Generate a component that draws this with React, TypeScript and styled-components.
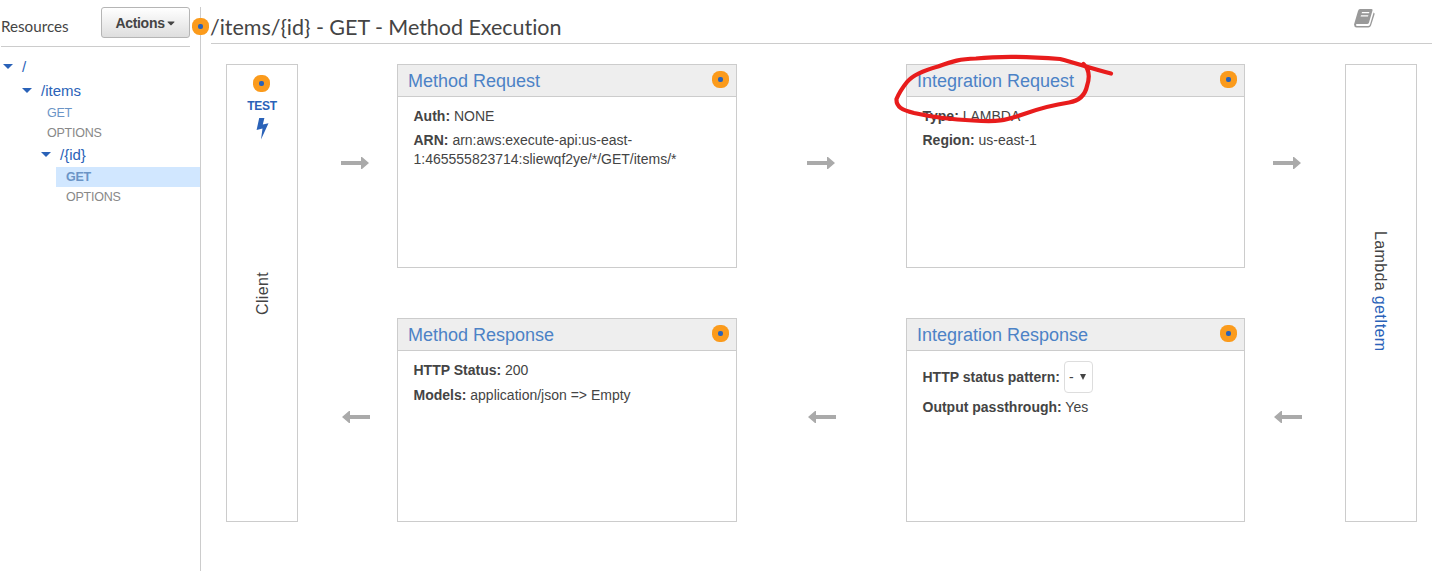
import React from 'react';
import styled, { createGlobalStyle, css } from 'styled-components';
import { FaCaretDown } from 'react-icons/fa';

const GlobalStyle = createGlobalStyle`
  * { box-sizing: border-box; }
  body {
    margin: 0;
    background: #fff;
    color: #444;
    font: 14px/19px "Liberation Sans", Arial, sans-serif;
    overflow: hidden;
  }
`;

const Page = styled.div`
  display: flex;
  width: 1439px;
  height: 571px;
  padding-top: 7px;
`;

const Sidebar = styled.aside`
  position: relative;
  width: 201px;
  flex: none;
  border-right: 1px solid #ccc;
`;

const SidebarHeader = styled.div`
  display: flex;
  justify-content: space-between;
  height: 40px;
  margin: 0 10px 8px 1px;
  border-bottom: 1px solid #ccc;
`;

const SidebarTitle = styled.span`
  font: 15.2px/39px Lato, sans-serif;
`;

const ActionsButton = styled.button`
  display: flex;
  align-items: center;
  justify-content: center;
  width: 89px;
  height: 31px;
  padding: 0 0 0 1px;
  border: 1px solid #b5b5b5;
  border-radius: 3px;
  background: linear-gradient(#fff, #dedede);
  color: #444;
  font: bold 14px "Liberation Sans", Arial, sans-serif;
  letter-spacing: -0.3px;
`;

const Bullet = styled.span`
  display: flex;
  align-items: center;
  justify-content: center;
  flex: none;
  width: 17px;
  height: 17px;
  border-radius: 7.5px;
  background: #fb9b1c;

  &::after {
    content: '';
    width: 5px;
    height: 5px;
    border-radius: 2px;
    background: #2a62b8;
  }
`;

const EdgeBullet = styled(Bullet)`
  position: absolute;
  top: 11px;
  right: -9px;
`;

const ResourceRow = styled.div<{ $depth: number }>`
  display: flex;
  align-items: center;
  gap: 9px;
  height: 24px;
  padding: 0 0 2px ${({ $depth }) => 3 + $depth * 19}px;
  color: #2a62b8;
  font-size: 15px;
`;

const Triangle = styled.span`
  border: solid transparent;
  border-width: 5px 5px 0;
  border-top-color: #2a62b8;
`;

const MethodRow = styled.div<{ $indent: number; $tone: string; $selected?: boolean }>`
  height: 20px;
  margin-left: ${({ $indent }) => $indent}px;
  padding-left: 10px;
  color: ${({ $tone }) => $tone};
  font-size: 12.5px;
  letter-spacing: -0.25px;
  line-height: 20px;
  ${({ $selected }) => $selected && css`
    background: #d1e7ff;
    font-weight: bold;
  `}
`;

const Main = styled.main`
  flex: none;
  width: 1221px;
  margin-left: 10px;
`;

const Header = styled.header`
  display: flex;
  justify-content: space-between;
  height: 37px;
  padding-right: 57px;
  border-bottom: 1px solid #ccc;
`;

const Title = styled.h1`
  margin: 0 0 0 -1px;
  color: #444;
  font: 21.5px/40px Lato, sans-serif;
  letter-spacing: -0.03px;
`;

const BookIcon = styled.svg`
  margin-top: 1px;
`;

const Diagram = styled.div`
  display: grid;
  grid-template-columns: 72px 99px 340px 169px 339px 100px 72px;
  grid-template-rows: 204px 50px 204px;
  margin: 20px 0 0 15px;
`;

const Endpoint = styled.div<{ $column: number }>`
  display: flex;
  flex-direction: column;
  align-items: center;
  grid-row: 1 / 4;
  grid-column: ${({ $column }) => $column};
  border: 1px solid #ccc;
`;

const TestLink = styled.div`
  display: flex;
  flex-direction: column;
  align-items: center;
  height: 80px;
  padding: 10px 0 0;
  color: #2a62b8;
  font: bold 12px/14px "Liberation Sans", Arial, sans-serif;
  letter-spacing: -0.35px;

  ${Bullet} { margin: 0 1px 7px 0; }
  svg { margin-top: 4px; }
`;

const VerticalLabel = styled.div<{ $up?: boolean }>`
  writing-mode: vertical-rl;
  font-size: 16px;
  line-height: 20px;
  letter-spacing: 0.35px;
  ${({ $up }) => $up ? css`
    margin: 127px 0 0 1px;
    transform: rotate(180deg);
  ` : css`
    margin: 166px 2px 0 0;
  `}
`;

const LambdaLink = styled.span`
  color: #2a62b8;
`;

const Card = styled.section<{ $column: number; $row: number }>`
  grid-column: ${({ $column }) => $column};
  grid-row: ${({ $row }) => $row};
  border: 1px solid #ccc;
`;

const CardHeader = styled.div`
  display: flex;
  justify-content: space-between;
  height: 32px;
  padding: 6px 7px 0 10px;
  border-bottom: 1px solid #ccc;
  background: #eee;
  color: #4c82c6;
  font-size: 18px;
  line-height: 20px;
`;

const CardBody = styled.div`
  padding: 10px 15.5px;
`;

const Field = styled.div<{ $gap?: number }>`
  margin-bottom: ${({ $gap = 5 }) => $gap}px;
`;

const SelectField = styled(Field)`
  display: flex;
  align-items: center;
  height: 32px;
`;

const StatusSelect = styled.span`
  display: flex;
  align-items: center;
  justify-content: space-between;
  width: 29px;
  height: 32px;
  margin-left: 4px;
  padding: 0 6px 0 4px;
  border: 1px solid #ddd;
  border-radius: 4px;
`;

const SelectMark = styled.span`
  border: solid transparent;
  border-width: 6px 3px 0;
  border-top-color: #444;
`;

const ArrowCell = styled.div<{ $column: number; $row: number; $shift: number }>`
  grid-column: ${({ $column }) => $column};
  grid-row: ${({ $row }) => $row};
  padding: 93px 0 0 ${({ $shift }) => $shift}px;

  svg { display: block; }
`;

const MarkerLoop = styled.svg`
  position: absolute;
  left: 890px;
  top: 50px;
  pointer-events: none;
`;

function Arrow({ column, row, shift }: { column: number; row: number; shift: number }) {
  return (
    <ArrowCell $column={column} $row={row} $shift={shift}>
      <svg width="28" height="12" viewBox="0 0 28 12" fill="#aaa">
        <path
          d="M0 4H20V0H21L28 6L21 12H20V8H0Z"
          transform={row === 3 ? 'matrix(-1 0 0 1 28 0)' : undefined}
        />
      </svg>
    </ArrowCell>
  );
}

function StageCard({ title, column, row, children }: {
  title: string; column: number; row: number; children: React.ReactNode;
}) {
  return (
    <Card $column={column} $row={row}>
      <CardHeader>{title}<Bullet /></CardHeader>
      <CardBody>{children}</CardBody>
    </Card>
  );
}

export default function App() {
  return (
    <>
      <GlobalStyle />
      <Page>
        <Sidebar>
          <SidebarHeader>
            <SidebarTitle>Resources</SidebarTitle>
            <ActionsButton>Actions<FaCaretDown size={12} /></ActionsButton>
          </SidebarHeader>
          <ResourceRow $depth={0}><Triangle />/</ResourceRow>
          <ResourceRow $depth={1}><Triangle />/items</ResourceRow>
          <MethodRow $indent={37} $tone="#6b94c6">GET</MethodRow>
          <MethodRow $indent={37} $tone="#888">OPTIONS</MethodRow>
          <ResourceRow $depth={2}><Triangle />/{'{id}'}</ResourceRow>
          <MethodRow $indent={56} $tone="#6b94c6" $selected>GET</MethodRow>
          <MethodRow $indent={56} $tone="#888">OPTIONS</MethodRow>
          <EdgeBullet />
        </Sidebar>
        <Main>
          <Header>
            <Title>/items/{'{id}'} - GET - Method Execution</Title>
            <BookIcon width="21" height="20" viewBox="0 0 21 20">
              <path d="M6 1H17.5Q19 1 18.5 2.5L15 14.5Q14.6 16 13 16H2.5Q1.4 16.4 2.5 18H14Q15.5 18 16 16.5L19.6 4.5Q21 5 20.5 6.5L17 17.5Q16.3 19.5 14.3 19.5H2.5Q0 19 0 16.5L4 3Q4.6 1 6 1ZM8 4L7.6 5.2H15L15.4 4ZM7 7.2L6.6 8.4H14L14.4 7.2Z" fill="#999" fillRule="evenodd" />
            </BookIcon>
          </Header>
          <Diagram>
            <Endpoint $column={1}>
              <TestLink>
                <Bullet />
                TEST
                <svg width="13" height="23" viewBox="0 0 13 23" fill="#2a62b8">
                  <path d="M3.2 1H8.4L6.8 7.5L12.5 6.2L5 22.5L6.5 11.5L.6 13Z" />
                </svg>
              </TestLink>
              <VerticalLabel $up>Client</VerticalLabel>
            </Endpoint>
            <Arrow column={2} row={1} shift={43} />
            <StageCard title="Method Request" column={3} row={1}>
              <Field><b>Auth:</b> NONE</Field>
              <Field><b>ARN:</b> arn:aws:execute-api:us-east-<br />1:465555823714:sliewqf2ye/*/GET/items/*</Field>
            </StageCard>
            <Arrow column={4} row={1} shift={70} />
            <StageCard title="Integration Request" column={5} row={1}>
              <Field><b>Type:</b> LAMBDA</Field>
              <Field><b>Region:</b> us-east-1</Field>
            </StageCard>
            <Arrow column={6} row={1} shift={28} />
            <Arrow column={2} row={3} shift={43.5} />
            <StageCard title="Method Response" column={3} row={3}>
              <Field $gap={6}><b>HTTP Status:</b> 200</Field>
              <Field><b>Models:</b> application/json =&gt; Empty</Field>
            </StageCard>
            <Arrow column={4} row={3} shift={71} />
            <StageCard title="Integration Response" column={5} row={3}>
              <SelectField>
                <b>HTTP status pattern:</b>
                <StatusSelect>-<SelectMark /></StatusSelect>
              </SelectField>
              <Field><b>Output passthrough:</b> Yes</Field>
            </StageCard>
            <Arrow column={6} row={3} shift={29} />
            <Endpoint $column={7}>
              <VerticalLabel>Lambda <LambdaLink>getItem</LambdaLink></VerticalLabel>
            </Endpoint>
          </Diagram>
        </Main>
      </Page>
      <MarkerLoop width="230" height="80" viewBox="890 50 230 80" fill="none" stroke="#e81c1c" strokeWidth="4.2" strokeLinecap="round" strokeLinejoin="round">
        <path d="M1083.5 64C1089 69 1090 77 1087 86C1085 96 1078 101 1069 102.500C1052 105 1038 109 1024 114C1004 121 998 122 973 120.500C950 119.500 932 117 914 113C902 110 896 107 896.500 99C899 93 903 87 907 82C913 75 925 70 938 66.500C953 61 960 59 976 58.500C1000 56 1035 57 1060 59C1076 63 1092 69 1111 73.500" />
      </MarkerLoop>
    </>
  );
}
